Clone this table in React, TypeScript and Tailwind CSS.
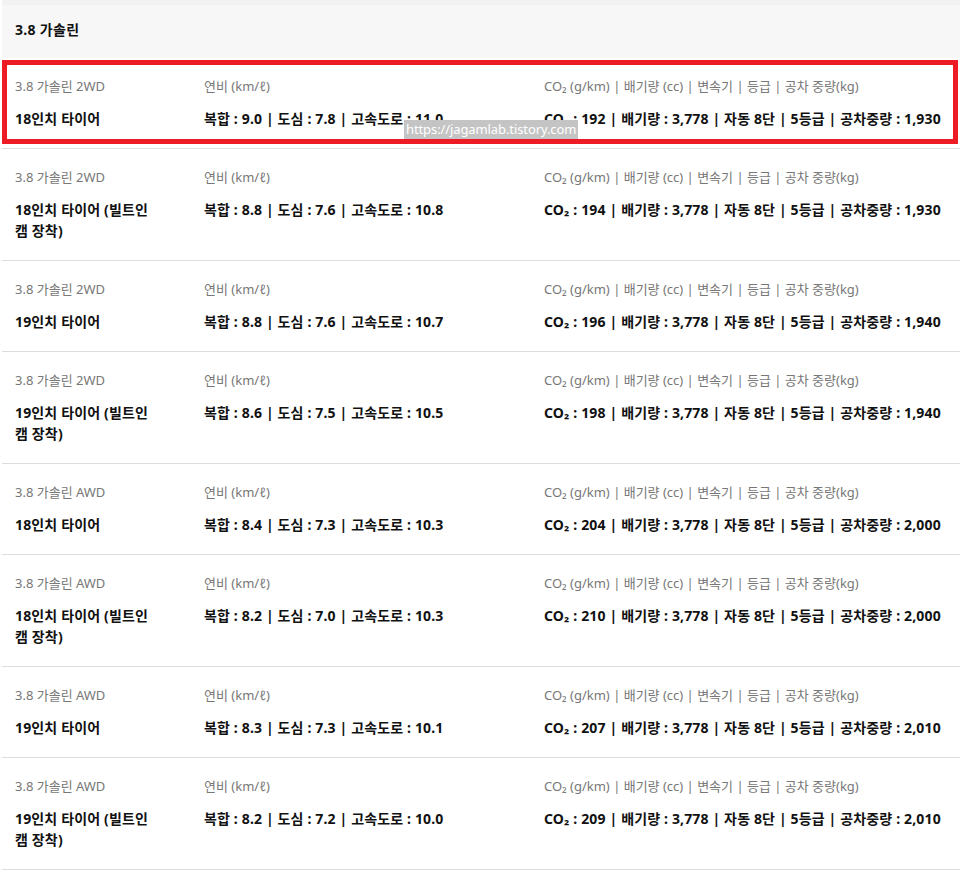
import React from 'react';

interface SpecRow {
  trim: string;
  tire: string[];
  fuel: string;
  spec: string;
}

const CAM = ['타이어 (빌트인', '캠 장착)'];

const rows: SpecRow[] = [
  { trim: '3.8 가솔린 2WD', tire: ['18인치 타이어'], fuel: '복합 : 9.0 | 도심 : 7.8 | 고속도로 : 11.0', spec: 'CO₂ : 192 | 배기량 : 3,778 | 자동 8단 | 5등급 | 공차중량 : 1,930' },
  { trim: '3.8 가솔린 2WD', tire: ['18인치 ' + CAM[0], CAM[1]], fuel: '복합 : 8.8 | 도심 : 7.6 | 고속도로 : 10.8', spec: 'CO₂ : 194 | 배기량 : 3,778 | 자동 8단 | 5등급 | 공차중량 : 1,930' },
  { trim: '3.8 가솔린 2WD', tire: ['19인치 타이어'], fuel: '복합 : 8.8 | 도심 : 7.6 | 고속도로 : 10.7', spec: 'CO₂ : 196 | 배기량 : 3,778 | 자동 8단 | 5등급 | 공차중량 : 1,940' },
  { trim: '3.8 가솔린 2WD', tire: ['19인치 ' + CAM[0], CAM[1]], fuel: '복합 : 8.6 | 도심 : 7.5 | 고속도로 : 10.5', spec: 'CO₂ : 198 | 배기량 : 3,778 | 자동 8단 | 5등급 | 공차중량 : 1,940' },
  { trim: '3.8 가솔린 AWD', tire: ['18인치 타이어'], fuel: '복합 : 8.4 | 도심 : 7.3 | 고속도로 : 10.3', spec: 'CO₂ : 204 | 배기량 : 3,778 | 자동 8단 | 5등급 | 공차중량 : 2,000' },
  { trim: '3.8 가솔린 AWD', tire: ['18인치 ' + CAM[0], CAM[1]], fuel: '복합 : 8.2 | 도심 : 7.0 | 고속도로 : 10.3', spec: 'CO₂ : 210 | 배기량 : 3,778 | 자동 8단 | 5등급 | 공차중량 : 2,000' },
  { trim: '3.8 가솔린 AWD', tire: ['19인치 타이어'], fuel: '복합 : 8.3 | 도심 : 7.3 | 고속도로 : 10.1', spec: 'CO₂ : 207 | 배기량 : 3,778 | 자동 8단 | 5등급 | 공차중량 : 2,010' },
  { trim: '3.8 가솔린 AWD', tire: ['19인치 ' + CAM[0], CAM[1]], fuel: '복합 : 8.2 | 도심 : 7.2 | 고속도로 : 10.0', spec: 'CO₂ : 209 | 배기량 : 3,778 | 자동 8단 | 5등급 | 공차중량 : 2,010' },
];

const label = 'text-[13px] text-[#777777] whitespace-nowrap';
const value = 'mt-[11px] font-bold text-[#111111] tracking-[0.15px] whitespace-nowrap';

const Row: React.FC<{ row: SpecRow; first?: boolean }> = ({ row, first }) => (
  <div className={`relative flex pt-[18px] pb-[19px] ${first ? '' : 'border-t border-[#dddddd]'}`}>
    <div className="w-[202px] pl-[13px] shrink-0">
      <div className={label}>{row.trim}</div>
      <div className={value}>
        {row.tire.map((t, i) => (
          <div key={i}>{t}</div>
        ))}
      </div>
    </div>
    <div className="w-[340px] shrink-0">
      <div className={label}>연비 (km/ℓ)</div>
      <div className={value}>{row.fuel}</div>
    </div>
    <div className="flex-1">
      <div className={label}>CO₂ (g/km) | 배기량 (cc) | 변속기 | 등급 | 공차 중량(kg)</div>
      <div className={value}>{row.spec}</div>
    </div>
    {first && (
      <>
        <div className="absolute left-0 right-[2px] top-[2px] bottom-[4px] border-[5px] border-[#ed1c24] pointer-events-none" />
        <div className="absolute left-[402px] top-[62px] h-[19px] px-[2px] bg-[#c4c4c4] text-white text-[13px] tracking-[-0.1px] leading-[19px] font-normal">
          https://jagamlab.tistory.com
        </div>
      </>
    )}
  </div>
);

export default function App() {
  return (
    <div
      className="w-[960px] min-h-[872px] bg-white text-[14px] leading-[21px]"
      style={{ fontFamily: '"Noto Sans", "Noto Sans CJK KR", sans-serif' }}
    >
      <div className="ml-[2px]">
        <div className="h-[58px] bg-[#f7f7f7] border-t-[5px] border-[#f2f2f2] flex items-center pl-[13px] pb-[5px]">
          <span className="font-bold text-[#111111] tracking-[0.3px]">3.8 가솔린</span>
        </div>
        {rows.map((r, i) => (
          <Row key={i} row={r} first={i === 0} />
        ))}
        <div className="border-t border-[#dddddd]" />
      </div>
    </div>
  );
}
